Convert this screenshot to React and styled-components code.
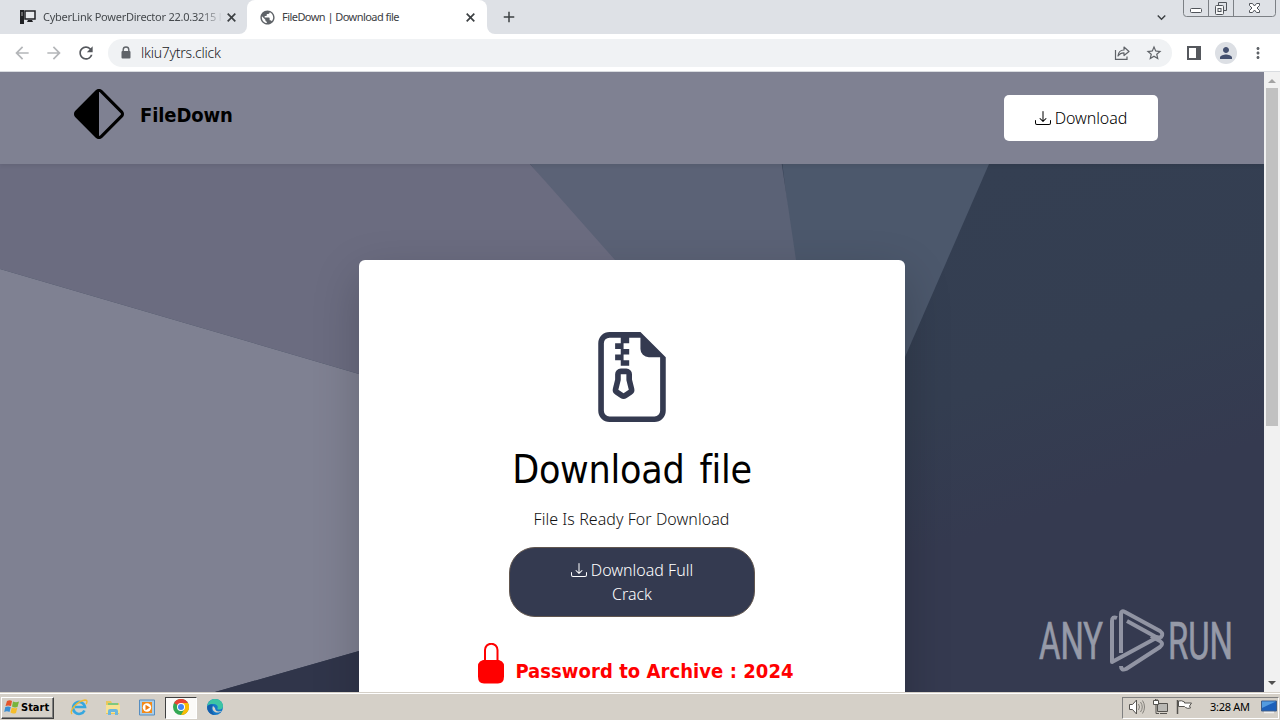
import * as React from 'react'
import styled, { createGlobalStyle } from 'styled-components'
import { BsDownload, BsDiamondHalf, BsFileEarmarkZip } from 'react-icons/bs'
import {
  MdArrowBack,
  MdArrowForward,
  MdRefresh,
  MdPublic,
  MdAdd,
  MdStarBorder,
  MdPerson,
  MdMoreVert,
  MdKeyboardArrowDown,
} from 'react-icons/md'

const ui = '"Noto Sans", "Open Sans", sans-serif'
const condensed = '"DejaVu Sans Condensed", "DejaVu Sans", sans-serif'

const GlobalStyle = createGlobalStyle`
  * {
    box-sizing: border-box;
  }

  body {
    margin: 0;
    overflow: hidden;
    font-family: ${ui};
  }

  svg {
    display: block;
    flex-shrink: 0;
  }
`

const Screen = styled('div')`
  width: 1280px;
  height: 720px;
  display: flex;
  flex-direction: column;
  overflow: hidden;
`

const TabStrip = styled('header')`
  height: 34px;
  flex-shrink: 0;
  display: flex;
  background: #dee1e6;
`

const Tab = styled('div')`
  width: ${p => (p.$active ? 240 : 247)}px;
  height: 34px;
  display: flex;
  align-items: center;
  padding: 0 ${p => (p.$active ? 10 : 9)}px 0 ${p => (p.$active ? 12 : 19)}px;
  color: ${p => (p.$active ? '#3c4043' : '#45494d')};
  background: ${p => (p.$active ? '#fff' : '#dee1e6')};
  border-radius: ${p => (p.$active ? '8px 8px 0 0' : '0 0 8px 0')};
`

const TabTitle = styled('span')`
  flex: 1;
  margin-left: ${p => p.$gap}px;
  padding-bottom: 2px;
  overflow: hidden;
  white-space: nowrap;
  font-size: 11px;
  letter-spacing: ${p => p.$spacing}px;
  mask-image: ${p => (p.$fade ? 'linear-gradient(90deg, #000 86%, transparent 99%)' : 'none')};
`

const TabCorner = styled('div')`
  width: 247px;
  height: 34px;
  background: #fff;
`

const NewTab = styled('div')`
  flex: 1;
  display: flex;
  align-items: center;
  padding-left: 13px;
  background: #dee1e6;
  border-radius: 0 0 0 8px;
  color: #3c4043;
`

const StripRest = styled('div')`
  flex: 1;
  display: flex;
  background: #fff;
`

const TabMenu = styled('div')`
  width: 30px;
  display: flex;
  align-items: center;
  color: #3c4043;
  background: #dee1e6;
`

const WindowButtons = styled('div')`
  width: 97px;
  padding-right: 4px;
  background: #dee1e6;
`

const Toolbar = styled('div')`
  height: 38px;
  flex-shrink: 0;
  display: flex;
  align-items: center;
  padding: 0 12px;
  background: #fff;
  border-bottom: 1px solid #d9dce0;
`

const NavIcons = styled('div')`
  display: flex;
  gap: 12px;
  width: 96px;
  color: #b4b6b9;
`

const AddressBar = styled('div')`
  width: 1064px;
  height: 28px;
  display: flex;
  align-items: center;
  padding: 0 9px 0 13px;
  border-radius: 14px;
  background: #f0f2f4;
  color: #5f6368;
`

const Url = styled('span')`
  flex: 1;
  margin-left: 10px;
  font-size: 14px;
  font-weight: 300;
  letter-spacing: -0.25px;
  color: #202124;
`

const AddressIcons = styled('div')`
  display: flex;
  align-items: center;
  gap: 15px;
`

const ToolbarEnd = styled('div')`
  flex: 1;
  display: flex;
  align-items: center;
  padding-left: 15px;
  color: #5f6368;
`

const Avatar = styled('div')`
  width: 22px;
  height: 22px;
  margin: 0 12px 0 14px;
  display: flex;
  align-items: center;
  justify-content: center;
  border-radius: 50%;
  background: #dcdfe4;
  color: #44506f;
`

const Viewport = styled('div')`
  height: 620px;
  flex-shrink: 0;
  display: flex;
`

const Page = styled('div')`
  position: relative;
  width: 1264px;
  overflow: hidden;
`

const Backdrop = styled('svg')`
  position: absolute;
  inset: 0;
  z-index: -1;
`

const Navbar = styled('nav')`
  height: 92px;
  display: flex;
  align-items: center;
  justify-content: space-between;
  padding: 0 106px 0 74px;
  background: #7f8192;
  box-shadow: 0 2px 4px rgba(0, 0, 0, 0.07);
`

const Brand = styled('div')`
  display: flex;
  align-items: center;
  gap: 16px;
  padding-bottom: 8px;
`

const BrandName = styled('span')`
  padding-top: 2px;
  font: 700 20px/50px ${condensed};
  font-stretch: condensed;
  letter-spacing: -0.1px;
`

const NavButton = styled('button')`
  width: 154px;
  height: 46px;
  display: flex;
  align-items: center;
  justify-content: center;
  gap: 4px;
  padding: 0;
  border: 0;
  border-radius: 5px;
  background: #fff;
  color: #000;
  font: 300 16px ${ui};
  letter-spacing: -0.1px;
`

const Card = styled('main')`
  width: 546px;
  height: 500px;
  margin: 96px 0 0 359px;
  padding-top: 72px;
  display: flex;
  flex-direction: column;
  align-items: center;
  background: #fff;
  border-radius: 6px;
  box-shadow: 0 16px 48px rgba(0, 0, 0, 0.2);
`

const Title = styled('h1')`
  margin: 24px 0 0;
  font: 400 39px/48px ${condensed};
  font-stretch: condensed;
  letter-spacing: -0.25px;
  word-spacing: 4px;
  white-space: nowrap;
`

const Lead = styled('p')`
  margin: 13px 1px 16px 0;
  font-size: 16px;
  font-weight: 300;
  line-height: 24px;
  letter-spacing: 0.05px;
  color: #111;
`

const CrackButton = styled('button')`
  width: 246px;
  height: 70px;
  display: flex;
  flex-direction: column;
  align-items: center;
  justify-content: center;
  padding: 0 0 1px;
  border: 1px solid #61564f;
  border-radius: 26px;
  background: #343a50;
  color: #fff;
  font: 300 16px/24px ${ui};
`

const ButtonLine = styled('span')`
  display: flex;
  align-items: center;
  gap: 4px;
`

const Password = styled('div')`
  display: flex;
  align-items: flex-start;
  gap: 11px;
  margin: 26px 0 0 8px;
  color: #f00;
  font: 700 20px/24px ${condensed};
  font-stretch: condensed;
  letter-spacing: 0.06px;
  white-space: nowrap;
`

const PasswordText = styled('span')`
  padding-top: 16px;
`

const Watermark = styled('svg')`
  position: absolute;
  left: 1034px;
  top: 534px;
`

const Scrollbar = styled('div')`
  width: 16px;
  display: flex;
  flex-direction: column;
  align-items: center;
  background: #f1f1f1;
`

const Thumb = styled('div')`
  width: 12px;
  height: 338px;
  background: #c1c1c1;
`

const ScrollArrow = styled('svg')`
  margin-top: ${p => (p.$end ? 'auto' : 0)};
`

const Taskbar = styled('footer')`
  height: 28px;
  flex-shrink: 0;
  display: flex;
  align-items: center;
  padding: 2px 1px 0;
  background: #d5d0c8;
  border-top: 1px solid #d5d0c8;
  box-shadow: inset 0 1px #fff;
`

const StartButton = styled('div')`
  width: 53px;
  height: 22px;
  display: flex;
  align-items: center;
  gap: 1px;
  padding: 0 0 1px 2px;
  border: 1px solid;
  border-color: #fff #404040 #404040 #fff;
  box-shadow: inset -1px -1px #808080;
  font: 700 11px ${condensed};
  font-stretch: condensed;
`

const QuickLaunch = styled('div')`
  flex: 1;
  display: flex;
  align-items: center;
  gap: 2px;
  padding-left: 9px;
`

const TaskItem = styled('div')`
  width: 32px;
  height: 22px;
  display: flex;
  align-items: center;
  justify-content: center;
  padding-bottom: 1px;
  border: 1px solid;
  border-color: ${p => (p.$active ? '#404040 #fff #fff #404040' : 'transparent')};
  background: ${p => (p.$active ? '#fbfaf8' : 'none')};
`

const Tray = styled('div')`
  width: 157px;
  height: 22px;
  display: flex;
  align-items: center;
  padding: 0 0 2px 5px;
  border: 1px solid;
  border-color: #808080 #fff #fff #808080;
`

const Clock = styled('span')`
  width: 51px;
  margin-left: 12px;
  font-size: 11px;
  letter-spacing: -0.3px;
  white-space: nowrap;
`

const ComputerIcon = () => (
  <svg width="17" height="16" viewBox="0 0 17 16">
    <path d="M1 1h4v14H1z" fill="#202124" />
    <path d="M6 2h10v8H6z" fill="#e8eaed" stroke="#202124" strokeWidth="1.5" />
    <path d="M9 11h4l1 2H8z" fill="#202124" />
    <path d="M2 4h2M2 6h2" stroke="#aaa" />
  </svg>
)

const CloseIcon = () => (
  <svg width="13" height="13" viewBox="0 0 13 13">
    <path d="M2.700 2.700l7.600 7.600M10.300 2.700l-7.600 7.600" stroke="#3c4043" strokeWidth="1.700" />
  </svg>
)

const WindowControls = () => (
  <svg width="93" height="17" viewBox="0 0 93 17" fill="none" stroke="#7c8085">
    <path d="M.5 0v13.500q0 3 3 3h86q3 0 3-3V0M25.500 0v16M50.500 0v16" />
    <g stroke="#50545a">
      <rect x="7.500" y="8.500" width="11" height="4" rx="1" fill="#fff" />
      <path d="M35.500 5.500v-3h8v8h-3" />
      <rect x="32.500" y="5.500" width="8" height="9" rx="1" fill="#f5f6f7" />
      <rect x="35" y="8.500" width="3" height="3" />
      <path d="M66.500 3.500h3l2 2.500 2-2.500h3v2l-2.500 2.500 2.500 2.500v2h-3l-2-2.500-2 2.500h-3v-2l2.500-2.500-2.500-2.500z" fill="#fff" />
    </g>
  </svg>
)

const SecureIcon = () => (
  <svg width="10" height="14" viewBox="0 0 10 14">
    <path d="M2.200 6V3.800a2.800 2.800 0 0 1 5.600 0V6" fill="none" stroke="#5f6368" strokeWidth="1.400" />
    <rect x="0.500" y="5" width="9" height="7.500" rx="1" fill="#5f6368" />
  </svg>
)

const ShareIcon = () => (
  <svg width="16" height="16" viewBox="0 0 16 16" fill="none" stroke="#5f6368" strokeWidth="1.2">
    <path d="M1.500 5v9.400h11.500V11.500" />
    <path d="M4 11c.4-4 2.500-6 6-6V2l5 4.500-5 4V7.800C7.500 7.800 5.500 8.700 4 11z" strokeLinejoin="round" />
  </svg>
)

const PanelIcon = () => (
  <svg width="14" height="14" viewBox="0 0 14 14">
    <path d="M0 0h14v14H0zM2 2v10h7V2z" fill="#55585d" fillRule="evenodd" />
  </svg>
)

const PadlockIcon = () => (
  <svg width="26" height="41" viewBox="0 0 26 41">
    <path d="M7 19V7a6 6 0 0 1 12.500 0v12" fill="none" stroke="red" strokeWidth="2" />
    <path d="M5 17h16l3 1.500q2 1.500 2 5v10q0 7-6 7H6q-6 0-6-7v-10q0-3.500 2-5z" fill="red" />
  </svg>
)

const PageBackdrop = () => (
  <Backdrop width="1264" height="620" viewBox="0 0 1264 620">
    <defs>
      <linearGradient id="navy" gradientUnits="userSpaceOnUse" x1="1000" y1="90" x2="1110" y2="420">
        <stop offset="0" stopColor="#343f52" />
        <stop offset="0.6" stopColor="#343e51" />
        <stop offset="1" stopColor="#353a50" />
      </linearGradient>
    </defs>
    <path d="M0 0h1264v620H0z" fill="url(#navy)" />
    <path d="M781 80h212l-4 12-84 193-100 0z" fill="#4c586c" />
    <path d="M520 80h260l16 108v60H660z" fill="#5b6276" />
    <path d="M0 80h520l10 12 85 96 60 112-316 2L0 197z" fill="#6b6c80" />
    <path d="M0 197l359 105 60 20v235l-60 22-144 41H0z" fill="#7f8192" />
    <path d="M215 620l144-41 60-18v59z" fill="#30354a" />
  </Backdrop>
)

const AnyRunMark = () => (
  <Watermark width="220" height="72" viewBox="0 0 220 72">
    <g fill="#969aa8" stroke="#969aa8" strokeWidth="0.700" fontFamily="Roboto, sans-serif" fontSize="51">
      <text x="5" y="53" textLength="64" lengthAdjust="spacingAndGlyphs">ANY</text>
      <text x="134" y="53" textLength="65" lengthAdjust="spacingAndGlyphs">RUN</text>
    </g>
    <g fill="none" stroke="#9194a3" strokeWidth="4" strokeLinejoin="round">
      <path d="M83 12q-5-2-5 3v41l46-25" />
      <path d="M87 47V8q0-4 4-2l35 19q4 3 1 6-2 1-5 0L93 15" />
      <path d="M87 60q0 5 5 3l34-22q4-3 0-6l-9-5" />
    </g>
  </Watermark>
)

const WindowsLogo = () => (
  <svg width="16" height="16" viewBox="0 0 16 16">
    <path d="M3 2q3-1.500 5 0L7 7Q4 6 1.500 7z" fill="#e5552b" />
    <path d="M9 2.500q3 1.500 6 0L13.500 8q-3 1-5.500-.5z" fill="#78b43c" />
    <path d="M1.300 8q2.700-1.200 5.500 0l-1.300 5q-2.500-1.500-5.300 0z" fill="#3b8fd4" />
    <path d="M7.800 8.500q2.700 1.500 5.500.3L12 14q-3 1.300-5.500-.5z" fill="#f5bd2b" />
  </svg>
)

const ExplorerIcon = () => (
  <svg width="18" height="18" viewBox="0 0 18 18" fill="none">
    <path d="M14.500 12.500a6 6 0 1 1 .5-3.500H5" stroke="#36a7df" strokeWidth="2.600" />
    <path d="M2 16C-1 13 7 3 15 2c3 0 2 3 1 4" stroke="#efb932" strokeWidth="1.300" />
  </svg>
)

const FolderIcon = () => (
  <svg width="16" height="17" viewBox="0 0 16 17">
    <path d="M1 2h5l1 2h7v11H1z" fill="#e9c85c" />
    <path d="M3 4h10v5H3z" fill="#7ec87f" />
    <path d="M1 6h14v8H1z" fill="#f7e294" />
    <path d="M3 16v-4q0-2 2-2h6q2 0 2 2v4h-3v-3H6v3z" fill="#6cb7de" />
  </svg>
)

const MediaIcon = () => (
  <svg width="16" height="17" viewBox="0 0 16 17">
    <path d="M.5 1h15v15H.5z" fill="#a9cde8" stroke="#568dc0" />
    <path d="M3 3h10v11H3z" fill="#f38b1b" />
    <circle cx="8" cy="8.500" r="4.200" fill="#fff" />
    <path d="M6.500 5.700l4.500 2.800-4.500 2.800z" fill="#ee7d14" />
  </svg>
)

const ChromeIcon = () => (
  <svg width="16" height="16" viewBox="0 0 16 16">
    <circle cx="8" cy="8" r="8" fill="#34a853" />
    <path d="M8 8L1 4a8 8 0 0 1 14 0z" fill="#ea4335" />
    <path d="M8 4h7a8 8 0 0 1-7 12l3.500-6z" fill="#fbbc05" />
    <circle cx="8" cy="8" r="4" fill="#fff" />
    <circle cx="8" cy="8" r="3" fill="#4285f4" />
  </svg>
)

const EdgeIcon = () => (
  <svg width="16" height="16" viewBox="0 0 16 16">
    <circle cx="8" cy="8" r="8" fill="#1478c8" />
    <path d="M.3 7C1 2.500 4.500 0 8 0c5 0 8 3.500 8 7 0 3-3 4-5 3.500-1-.3-.5-1-.3-2C11 6 8 4.500 5 5 3 5.200 1 6 .3 7z" fill="#3cc4a4" />
    <path d="M6 7c-2 4 2 8 7 6 1-.3 1.500-.4 1-1-2 1-6 .5-6-3z" fill="#d5d0c8" />
    <path d="M5 7c-1 3 0 7 3 9C3 16 0 12 .2 8c1-2 3-3 6-2z" fill="#155eab" />
  </svg>
)

const TrayIcons = () => (
  <svg width="70" height="18" viewBox="0 0 70 18" fill="#fff" stroke="#55534f">
    <path d="M1.500 6.500h3L8.500 2v14l-4-4.500h-3z" />
    <path d="M10.500 6q2 3 0 6M12.500 4q3.500 5 0 10M14.500 2.500q4 6.500 0 13" fill="none" stroke="#85827c" />
    <path d="M29.500 5.500h10v8h-10z" fill="#b9b8b4" />
    <path d="M25.500 2.500v4h5v-4zM27.500 1v2M29 1v2" />
    <path d="M28 7v8.500h3M32 15.500h7" fill="none" />
    <path d="M49.500 2v14" strokeWidth="1.500" />
    <path d="M50.500 3q3-1 6 1v1h7l-2 3 1 2q-3 1-5-.5l-1-1h-6z" />
  </svg>
)

const DesktopIcon = () => (
  <svg width="16" height="14" viewBox="0 0 16 14">
    <path d="M.5 1h15v10H.5z" fill="#1d60ba" stroke="#405d87" />
    <path d="M1 1.500h14L1 8z" fill="#539be0" />
    <path d="M3 12.500h10" stroke="#eee" strokeWidth="1.500" />
  </svg>
)

const App = () => {
  return (
    <Screen>
      <GlobalStyle />
      <TabStrip>
        <TabCorner>
          <Tab>
            <ComputerIcon />
            <TabTitle $gap={7} $spacing={-0.25} $fade>CyberLink PowerDirector 22.0.3215 l</TabTitle>
            <CloseIcon />
          </Tab>
        </TabCorner>
        <Tab $active>
          <MdPublic size={17} color="#5f6368" />
          <TabTitle $gap={6} $spacing={-0.55}>FileDown | Download file</TabTitle>
          <CloseIcon />
        </Tab>
        <StripRest>
          <NewTab>
            <MdAdd size={18} />
          </NewTab>
          <TabMenu>
            <MdKeyboardArrowDown size={17} />
          </TabMenu>
          <WindowButtons>
            <WindowControls />
          </WindowButtons>
        </StripRest>
      </TabStrip>

      <Toolbar>
        <NavIcons>
          <MdArrowBack size={20} />
          <MdArrowForward size={20} />
          <MdRefresh size={20} color="#55585d" />
        </NavIcons>
        <AddressBar>
          <SecureIcon />
          <Url>lkiu7ytrs.click</Url>
          <AddressIcons>
            <ShareIcon />
            <MdStarBorder size={18} />
          </AddressIcons>
        </AddressBar>
        <ToolbarEnd>
          <PanelIcon />
          <Avatar>
            <MdPerson size={18} />
          </Avatar>
          <MdMoreVert size={18} />
        </ToolbarEnd>
      </Toolbar>

      <Viewport>
        <Page>
          <PageBackdrop />
          <Navbar>
            <Brand>
              <BsDiamondHalf size={50} />
              <BrandName>FileDown</BrandName>
            </Brand>
            <NavButton>
              <BsDownload size={16} />
              Download
            </NavButton>
          </Navbar>
          <Card>
            <BsFileEarmarkZip size={90} color="#343a50" />
            <Title>Download file</Title>
            <Lead>File Is Ready For Download</Lead>
            <CrackButton>
              <ButtonLine>
                <BsDownload size={16} />
                Download Full
              </ButtonLine>
              <ButtonLine>Crack</ButtonLine>
            </CrackButton>
            <Password>
              <PadlockIcon />
              <PasswordText>Password to Archive : 2024</PasswordText>
            </Password>
          </Card>
          <AnyRunMark />
        </Page>
        <Scrollbar>
          <ScrollArrow width="16" height="16" viewBox="0 0 16 16">
            <path d="M4 11l4-4 4 4z" fill="#a3a3a3" />
          </ScrollArrow>
          <Thumb />
          <ScrollArrow $end width="16" height="16" viewBox="0 0 16 16">
            <path d="M4 5l4 4 4-4z" fill="#505050" />
          </ScrollArrow>
        </Scrollbar>
      </Viewport>

      <Taskbar>
        <StartButton>
          <WindowsLogo />
          Start
        </StartButton>
        <QuickLaunch>
          <TaskItem><ExplorerIcon /></TaskItem>
          <TaskItem><FolderIcon /></TaskItem>
          <TaskItem><MediaIcon /></TaskItem>
          <TaskItem $active><ChromeIcon /></TaskItem>
          <TaskItem><EdgeIcon /></TaskItem>
        </QuickLaunch>
        <Tray>
          <TrayIcons />
          <Clock>3:28 AM</Clock>
          <DesktopIcon />
        </Tray>
      </Taskbar>
    </Screen>
  )
}

export default App
